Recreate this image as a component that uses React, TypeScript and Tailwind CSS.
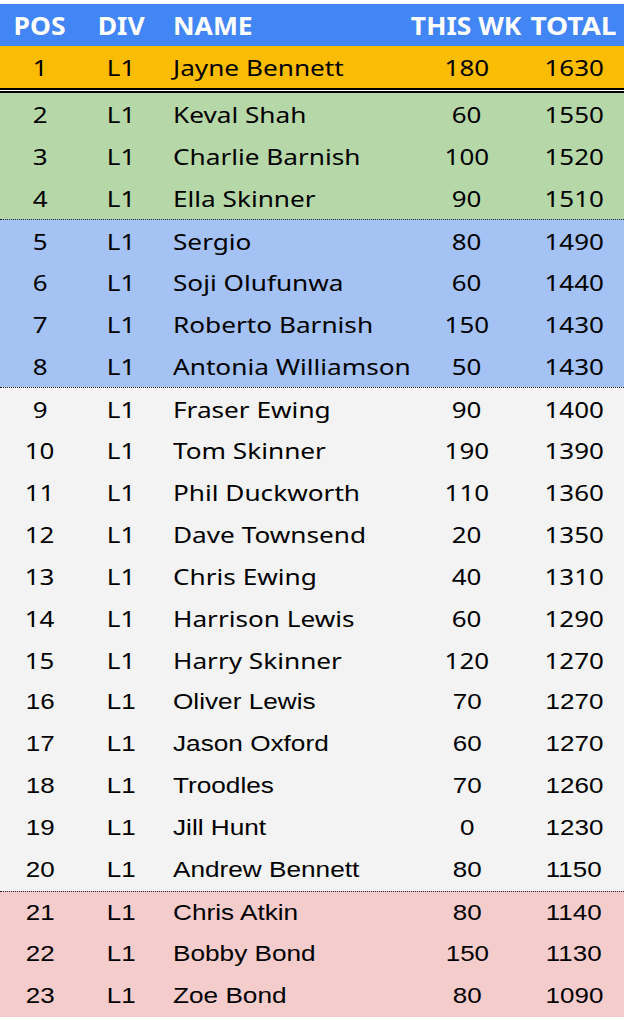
import React from "react";

type Row = [number, string, number, number];

const rows: Row[] = [
  [1, "Jayne Bennett", 180, 1630],
  [2, "Keval Shah", 60, 1550],
  [3, "Charlie Barnish", 100, 1520],
  [4, "Ella Skinner", 90, 1510],
  [5, "Sergio", 80, 1490],
  [6, "Soji Olufunwa", 60, 1440],
  [7, "Roberto Barnish", 150, 1430],
  [8, "Antonia Williamson", 50, 1430],
  [9, "Fraser Ewing", 90, 1400],
  [10, "Tom Skinner", 190, 1390],
  [11, "Phil Duckworth", 110, 1360],
  [12, "Dave Townsend", 20, 1350],
  [13, "Chris Ewing", 40, 1310],
  [14, "Harrison Lewis", 60, 1290],
  [15, "Harry Skinner", 120, 1270],
  [16, "Oliver Lewis", 70, 1270],
  [17, "Jason Oxford", 60, 1270],
  [18, "Troodles", 70, 1260],
  [19, "Jill Hunt", 0, 1230],
  [20, "Andrew Bennett", 80, 1150],
  [21, "Chris Atkin", 80, 1140],
  [22, "Bobby Bond", 150, 1130],
  [23, "Zoe Bond", 80, 1090],
];

function bgFor(pos: number) {
  if (pos === 1) return "bg-[#fbbc04]";
  if (pos <= 4) return "bg-[#b6d7a8]";
  if (pos <= 8) return "bg-[#a4c2f4]";
  if (pos <= 20) return "bg-[#f3f3f3]";
  return "bg-[#f4cccc]";
}

function DataRow({ r }: { r: Row }) {
  const [pos, name, wk, total] = r;
  const arial = pos >= 16;
  const font = arial
    ? "font-['Liberation_Sans',Arial,sans-serif]"
    : "font-['Noto_Sans','Open_Sans',sans-serif]";
  const dotted = pos === 5 || pos === 9 || pos === 21;
  return (
    <div
      className={`flex h-[42px] items-center text-[22px] leading-[40px] text-black ${font} ${bgFor(pos)} ${
        dotted ? "border-t border-dotted border-[#222]" : ""
      }`}
    >
      <div className="flex w-[80px] justify-center">
        <span className="inline-block origin-center scale-x-[1.18]">{pos}</span>
      </div>
      <div className="flex w-[82px] justify-center">
        <span className="inline-block origin-center scale-x-[1.18]">L1</span>
      </div>
      <div className="w-[248px] overflow-hidden whitespace-nowrap pl-[11px]">
        <span className="inline-block origin-left scale-x-[1.19]">{name}</span>
      </div>
      <div className="flex w-[114px] justify-center">
        <span className="inline-block origin-center scale-x-[1.18]">{wk}</span>
      </div>
      <div className="flex w-[100px] justify-center">
        <span className="inline-block origin-center scale-x-[1.18]">{total}</span>
      </div>
    </div>
  );
}

export default function App() {
  return (
    <div className="h-[1020px] w-[624px] overflow-hidden bg-white pt-[4px]">
      <div className="flex h-[42px] items-center bg-[#4285f4] font-['Noto_Sans','Open_Sans',sans-serif] text-[25px] font-bold leading-[40px] text-white">
        <div className="flex w-[80px] justify-center">
          <span className="inline-block origin-center scale-x-[1.06]">POS</span>
        </div>
        <div className="flex w-[82px] justify-center">
          <span className="inline-block origin-center scale-x-[1.06]">DIV</span>
        </div>
        <div className="w-[248px] pl-[11px]">
          <span className="inline-block origin-left scale-x-[1.06]">NAME</span>
        </div>
        <div className="flex w-[112px] justify-center whitespace-nowrap">
          <span className="inline-block origin-center scale-x-[1.06]">THIS WK</span>
        </div>
        <div className="flex w-[102px] justify-center">
          <span className="inline-block origin-center scale-x-[1.12]">TOTAL</span>
        </div>
      </div>
      <DataRow r={rows[0]} />
      <div className="h-[2px] bg-black" />
      <div className="h-[1px] bg-white" />
      <div className="h-[2px] bg-black" />
      {rows.slice(1).map((r) => (
        <DataRow key={r[0]} r={r} />
      ))}
    </div>
  );
}
